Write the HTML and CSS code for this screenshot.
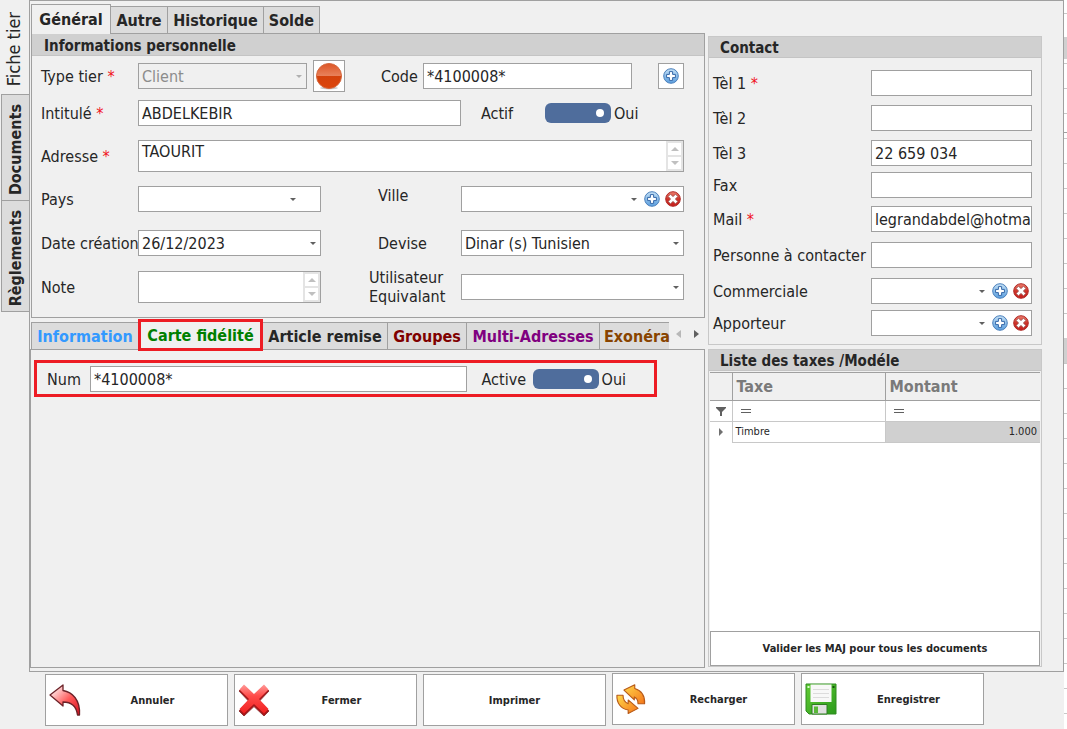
FILE: index.html
```html
<!DOCTYPE html>
<html lang="fr">
<head>
<meta charset="utf-8">
<title>Fiche tier</title>
<link rel="stylesheet" href="styles.css">
</head>
<body>
<svg class="defs" aria-hidden="true">
  <defs>
    <linearGradient id="blue" x1="0" y1="0" x2="0" y2="1"><stop offset="0" stop-color="#c4e0f5"/><stop offset="1" stop-color="#5a9ede"/></linearGradient>
    <linearGradient id="red" x1="0" y1="0" x2="0" y2="1"><stop offset="0" stop-color="#ee8070"/><stop offset="0.5" stop-color="#cf3329"/><stop offset="1" stop-color="#c81e1c"/></linearGradient>
    <linearGradient id="ball" x1="0" y1="0" x2="0" y2="1"><stop offset="0" stop-color="#dd5525"/><stop offset="0.48" stop-color="#e8805a"/><stop offset="0.5" stop-color="#d4420c"/><stop offset="1" stop-color="#dc440a"/></linearGradient>
    <linearGradient id="undo" x1="0" y1="0" x2="1" y2="1"><stop offset="0.2" stop-color="#ffd0d0"/><stop offset="0.55" stop-color="#ff5a5a"/><stop offset="1" stop-color="#d81020"/></linearGradient>
    <linearGradient id="cross" x1="0" y1="0" x2="0" y2="1"><stop offset="0" stop-color="#ff9a98"/><stop offset="0.4" stop-color="#ff4a48"/><stop offset="1" stop-color="#f02020"/></linearGradient>
    <linearGradient id="orange" x1="0" y1="0" x2="1" y2="1"><stop offset="0" stop-color="#ffd84a"/><stop offset="1" stop-color="#f5761a"/></linearGradient>
    <linearGradient id="green" x1="0" y1="0" x2="1" y2="1"><stop offset="0" stop-color="#62cc34"/><stop offset="1" stop-color="#2c9a1c"/></linearGradient>
    <symbol id="add" viewBox="0 0 16 16"><circle cx="8" cy="8" r="7.3" fill="url(#blue)" stroke="#4c80bc"/><path d="M6.4 3.6h3.2v2.8h2.8v3.2H9.6v2.8H6.4V9.6H3.6V6.4h2.8z" fill="#fff" stroke="#3567a8"/></symbol>
    <symbol id="del" viewBox="0 0 16 16"><circle cx="8" cy="8" r="7.3" fill="url(#red)" stroke="#b02a26"/><path d="M5.5 3.2 8 5.600l2.500-2.400 2.300 2.300L10.400 8l2.400 2.500-2.300 2.300L8 10.400l-2.500 2.400-2.300-2.300L5.600 8 3.200 5.500z" fill="#fff" stroke="#97504c" stroke-width=".8"/></symbol>
  </defs>
</svg>

<div class="shell">
  <main class="window">
    <div class="upper">
      <nav class="side-tabs" role="tablist" aria-label="Sections">
        <button class="side-tab side-tab--active" role="tab" aria-selected="true"><span>Fiche tier</span></button>
        <button class="side-tab side-tab--docs" role="tab"><span>Documents</span></button>
        <button class="side-tab side-tab--regl" role="tab"><span>Règlements</span></button>
      </nav>

      <div class="page">
        <div class="left">
          <div class="tabs" role="tablist">
            <button class="tab tab--active" role="tab" aria-selected="true">Général</button>
            <button class="tab tab--autre" role="tab">Autre</button>
            <button class="tab tab--histo" role="tab">Historique</button>
            <button class="tab tab--solde" role="tab">Solde</button>
          </div>

          <section class="panel panel--person">
            <h2 class="title">Informations personnelle</h2>
            <form class="form">
              <div class="row">
                <label class="lead" for="type">Type tier <i>*</i></label>
                <div class="combo combo--off combo--type"><select id="type" disabled><option>Client</option></select></div>
                <button type="button" class="square square--ball" aria-label="Couleur"><svg width="28" height="28" viewBox="0 0 28 28"><ellipse cx="14" cy="26" rx="9" ry="1.500" fill="#ccc"/><circle cx="14" cy="14" r="12.500" fill="url(#ball)" stroke="#d4663c"/></svg></button>
                <label class="code-label" for="code">Code</label>
                <input class="field grow" id="code" value="*4100008*">
                <button type="button" class="square square--add" aria-label="Ajouter"><svg width="16" height="16"><use href="#add"/></svg></button>
              </div>
              <div class="row row--name">
                <label class="lead" for="intitule">Intitulé <i>*</i></label>
                <input class="field grow" id="intitule" value="ABDELKEBIR">
                <label class="actif-label" for="actif">Actif</label>
                <input type="checkbox" class="toggle" id="actif" checked>
                <span class="state state--wide">Oui</span>
              </div>
              <div class="row row--address">
                <label class="lead" for="adresse">Adresse <i>*</i></label>
                <div class="memo grow"><textarea id="adresse">TAOURIT</textarea><div class="spin"><button type="button" class="up" aria-label="Haut"></button><button type="button" class="down" aria-label="Bas"></button></div></div>
              </div>
              <div class="pair pair--pays">
                <label for="pays">Pays</label>
                <div class="combo combo--pays"><select id="pays"><option></option></select></div>
                <label class="mid mid--ville" for="ville">Ville</label>
                <div class="combo combo--icons"><select id="ville"><option></option></select><button type="button" aria-label="Ajouter"><svg width="16" height="16"><use href="#add"/></svg></button><button type="button" aria-label="Supprimer"><svg width="16" height="16"><use href="#del"/></svg></button></div>
              </div>
              <div class="pair pair--date">
                <label for="date">Date création</label>
                <div class="combo"><select id="date"><option>26/12/2023</option></select></div>
                <label class="mid" for="devise">Devise</label>
                <div class="combo"><select id="devise"><option>Dinar (s) Tunisien</option></select></div>
              </div>
              <div class="pair pair--note">
                <label for="note">Note</label>
                <div class="memo"><textarea id="note"></textarea><div class="spin"><button type="button" class="up" aria-label="Haut"></button><button type="button" class="down" aria-label="Bas"></button></div></div>
                <label class="mid mid--user" for="user">Utilisateur<br>Equivalant</label>
                <div class="combo"><select id="user"><option></option></select></div>
              </div>
            </form>
          </section>

          <div class="subtabs">
            <div class="subtabs-list" role="tablist">
              <button class="subtab subtab--info" role="tab">Information</button>
              <button class="subtab subtab--carte" role="tab" aria-selected="true">Carte fidélité</button>
              <button class="subtab subtab--article" role="tab">Article remise</button>
              <button class="subtab subtab--groupes" role="tab">Groupes</button>
              <button class="subtab subtab--multi" role="tab">Multi-Adresses</button>
              <button class="subtab subtab--exo" role="tab">Exonéra</button>
            </div>
            <button class="scroll" aria-label="Précédent"><svg width="5" height="8" viewBox="0 0 5 8"><path d="M5 0v8L0 4z" fill="#b8b8b8"/></svg></button>
            <button class="scroll" aria-label="Suivant"><svg width="5" height="8" viewBox="0 0 5 8"><path d="M0 0v8l5-4z" fill="#606060"/></svg></button>
          </div>
          <section class="card-panel">
            <div class="card-row">
              <label class="num-label" for="num">Num</label>
              <input class="field grow" id="num" value="*4100008*">
              <label class="active-label" for="active">Active</label>
              <input type="checkbox" class="toggle" id="active" checked>
              <span class="state">Oui</span>
            </div>
          </section>
        </div>

        <div class="right">
          <section class="group">
            <h2 class="title">Contact</h2>
            <form class="contact">
              <label for="tel1">Tèl 1 <i>*</i></label><input class="field" id="tel1">
              <label for="tel2">Tèl 2</label><input class="field" id="tel2">
              <label for="tel3">Tèl 3</label><input class="field" id="tel3" value="22 659 034">
              <label for="fax">Fax</label><input class="field" id="fax">
              <label for="mail">Mail <i>*</i></label><input class="field field--full" id="mail" value="legrandabdel@hotmai">
              <label for="pers">Personne à contacter</label><input class="field" id="pers">
              <label for="comm">Commerciale</label>
              <div class="combo combo--icons"><select id="comm"><option></option></select><button type="button" aria-label="Ajouter"><svg width="16" height="16"><use href="#add"/></svg></button><button type="button" aria-label="Supprimer"><svg width="16" height="16"><use href="#del"/></svg></button></div>
              <label for="app">Apporteur</label>
              <div class="combo combo--icons"><select id="app"><option></option></select><button type="button" aria-label="Ajouter"><svg width="16" height="16"><use href="#add"/></svg></button><button type="button" aria-label="Supprimer"><svg width="16" height="16"><use href="#del"/></svg></button></div>
            </form>
          </section>

          <section class="group group--taxes">
            <h2 class="title">Liste des taxes /Modéle</h2>
            <div class="grid-area">
              <table class="taxes">
                <colgroup><col class="c-mark"><col class="c-taxe"><col></colgroup>
                <thead><tr><th></th><th>Taxe</th><th>Montant</th></tr></thead>
                <tbody>
                  <tr class="filter"><td><svg width="10" height="9" viewBox="0 0 10 9"><path d="M0 0h10v1L6 5v4H4V5L0 1z" fill="#606060"/></svg></td><td><svg width="10" height="4" viewBox="0 0 10 4"><path d="M0 0h10v1H0zM0 3h10v1H0z" fill="#606060"/></svg></td><td><svg width="10" height="4" viewBox="0 0 10 4"><path d="M0 0h10v1H0zM0 3h10v1H0z" fill="#606060"/></svg></td></tr>
                  <tr class="data"><td><svg width="4" height="8" viewBox="0 0 4 8"><path d="M0 0v8l4-4z" fill="#707070"/></svg></td><td>Timbre</td><td class="amount">1.000</td></tr>
                </tbody>
              </table>
            </div>
            <button class="validate">Valider les MAJ pour tous les documents</button>
          </section>
        </div>
      </div>
    </div>

    <footer class="actions">
      <button class="action">
        <svg width="32" height="32" viewBox="0 0 32 32"><path d="M1 11 14 1v5.500c9 1.500 17.500 9 16.500 24.500h-2c-1-8-6-13-14.500-13V22z" fill="url(#undo)" stroke="#6b2228" stroke-width="1.300" stroke-linejoin="round"/></svg>
        <span>Annuler</span></button>
      <button class="action">
        <svg width="32" height="34" viewBox="0 0 32 34"><path d="M6 3 16 12.500 26 3l5 5-9.500 10L31 28l-5 5-10-9.500L6 33l-5-5 9.500-10L1 8z" fill="#a81518" stroke="#96383a" stroke-linejoin="round"/><path d="M6 1.500 16 11 26 1.500l4.500 5L21 16l9.500 10-4.500 4.500L16 21l-10 9.500L1.500 26 11 16 1.500 6.500z" fill="url(#cross)"/></svg>
        <span>Fermer</span></button>
      <button class="action action--plain"><span>Imprimer</span></button>
      <button class="action action--high">
        <svg width="30" height="32" viewBox="0 0 32 32"><g fill="url(#orange)" stroke="#b85a18" stroke-width="1.200" stroke-linejoin="round"><path d="M8.500 6.500 20 .8v4C27 7 31 13 30.500 21h-7c0-3.500-1-6-4-7.200V17z"/><path d="M1 12h6.500c0 4 1.500 7.500 5.500 9v-4L23.500 26 13 31.500v-3.700C5 26.500.5 20 1 12z"/></g></svg>
        <span>Recharger</span></button>
      <button class="action action--high">
        <svg width="32" height="32" viewBox="0 0 32 32"><path d="M1 1h30v30H4l-3-3z" fill="url(#green)" stroke="#2f8a20"/><path d="M5.500 1.500h21V19h-21z" fill="#f8f8f8"/><path d="M8 6.500h16M8 10.500h16M8 14.500h16" stroke="#dcdcdc"/><path d="M2.500 3h2v2h-2z" fill="#d8ffd0"/><path d="M27.500 3h2v2h-2z" fill="#14540c"/><path d="M7 21.500h15V31H7z" fill="#e0e0e0" stroke="#2f7a22"/><path d="M9 23.500h4V30H9z" fill="#58b838"/></svg>
        <span>Enregistrer</span></button>
    </footer>
  </main>
  <div class="backdrop"></div>
</div>
</body>
</html>
```

FILE: styles.css
```css
* { box-sizing: border-box; }

body {
  margin: 0;
  background: #f0f0f0;
  color: #262626;
  font: 16px/19px "DejaVu Sans Condensed", "DejaVu Sans", Tahoma, sans-serif;
}

button, input, select, textarea {
  margin: 0;
  padding: 0;
  border: 0;
  border-radius: 0;
  background: none;
  color: inherit;
  font: inherit;
  outline: none;
}

i { color: #f01020; font-style: normal; }
svg { display: block; flex: none; }
.defs { position: absolute; width: 0; height: 0; }
.grow { flex: 1; min-width: 0; }

.shell { display: flex; min-height: 100vh; }
.window { flex: 1; min-width: 0; display: flex; flex-direction: column; }
.upper { flex: 1; display: flex; }

.backdrop {
  width: 3px;
  background:
    linear-gradient(#d0d0d0, #d0d0d0) 0 37px / 100% 22px no-repeat,
    linear-gradient(#a0a0a0, #a0a0a0) 0 132px / 100% 1px no-repeat,
    linear-gradient(#d0d0d0, #d0d0d0) 0 338px / 100% 25px no-repeat,
    repeating-linear-gradient(#fff 0 13px, #c8c8c8 13px 14px, #fff 14px 25px);
}

/* Vertical section tabs */
.side-tabs { width: 29px; display: flex; flex-direction: column; padding-left: 1px; }
.side-tab {
  display: flex;
  align-items: center;
  justify-content: center;
  padding-top: 4px;
  border: 1px solid #a0a0a0;
  border-right: 0;
  background: #dcdcdc;
  font-weight: bold;
}
.side-tab span { writing-mode: vertical-rl; transform: rotate(180deg); white-space: nowrap; }
.side-tab--active { height: 94px; padding-right: 4px; border: 0; background: none; font-size: 18px; font-weight: normal; }
.side-tab--docs { height: 107px; }
.side-tab--regl { height: 111px; border-top: 0; }

.page {
  flex: 1;
  min-width: 0;
  display: flex;
  gap: 3px;
  padding: 3px 21px 3px 0;
  border: 1px solid #a0a0a0;
}
.left { flex: 1; min-width: 0; display: flex; flex-direction: column; }
.right { flex: 0 0 334px; display: flex; flex-direction: column; gap: 4px; padding: 32px 0 1px; }

.tabs { display: flex; align-items: flex-end; height: 29px; padding-left: 1px; }
.tab {
  height: 27px;
  border: 1px solid #a0a0a0;
  border-left: 0;
  border-bottom: 0;
  background: #dcdcdc;
  font-weight: bold;
}
.tab--active { z-index: 1; width: 80px; height: 30px; margin-bottom: -1px; border-left: 1px solid #a0a0a0; background: #f0f0f0; }
.tab--autre { width: 57px; }
.tab--histo { width: 96px; }
.tab--solde { width: 56px; }

.panel { margin-left: 1px; border: 1px solid #a0a0a0; }
.title {
  height: 21px;
  margin: 0;
  padding-left: 11px;
  border-bottom: 1px solid #c4c4c4;
  background: #d0d0d0;
  font-size: 15px;
  line-height: 22px;
}
.panel .title { height: 22px; padding-left: 12px; line-height: 24px; }

.form { padding: 4px 20px 11px 9px; }
.row, .card-row { display: flex; align-items: center; }
.row--name { margin-top: 8px; }
.row--address { margin-top: 14px; }
.lead { width: 97px; }

.pair { display: grid; grid-template-columns: 97px 183fr 140px 223fr; align-items: center; white-space: nowrap; }
.pair--pays { margin-top: 14px; }
.pair--date { margin-top: 18px; }
.pair--note { margin-top: 12px; }
.mid { padding-left: 57px; }
.mid--ville { padding-bottom: 7px; }
.mid--user { padding-left: 48px; }

.field, .combo, .memo { border: 1px solid #a0a0a0; background: #fff; }
.field { width: 100%; height: 26px; padding: 0 3px; }
.field--full { padding-right: 0; }
.combo { display: flex; align-items: center; height: 26px; padding: 0 3px; position: relative; }
.combo select { flex: 1; min-width: 0; height: 24px; padding-right: 14px; appearance: none; }
.combo::after {
  content: "";
  position: absolute;
  right: 4px;
  top: 11px;
  border: 3px solid transparent;
  border-top-color: #606060;
  border-bottom: 0;
  pointer-events: none;
}
.combo--pays::after { right: 24px; }
.combo--icons { gap: 5px; padding: 0 2px; }
.combo--icons::after { right: 46px; }
.combo--type { flex: 0 0 169px; }
.combo--off { background: #f0f0f0; color: #8c8c8c; }
.combo--off select { opacity: 1; }
.combo--off::after { border-top-color: #b0b0b0; }

.memo { display: flex; height: 32px; }
.memo textarea { flex: 1; min-width: 0; padding: 1px 3px; resize: none; overflow: hidden; }
.spin { width: 17px; display: flex; flex-direction: column; padding: 2px; background: #e4e4e4; gap: 2px; }
.spin button { flex: 1; display: flex; align-items: center; justify-content: center; background: #fff; }
.spin button::before { content: ""; border: 4px solid transparent; }
.spin .up::before { border-top: 0; border-bottom-color: #c0c0c0; }
.spin .down::before { border-bottom: 0; border-top-color: #c0c0c0; }

.square { display: flex; align-items: center; justify-content: center; border: 1px solid #a0a0a0; background: #fff; }
.square--ball { width: 32px; height: 32px; margin-left: 6px; }
.square--add { width: 26px; height: 26px; margin-left: 26px; }
.code-label { width: 78px; padding-left: 36px; }
.actif-label { width: 84px; padding-left: 20px; }

.toggle {
  appearance: none;
  display: flex;
  flex: none;
  align-items: center;
  justify-content: flex-end;
  width: 66px;
  height: 20px;
  padding-right: 7px;
  border-radius: 6px;
  background: #4f6d9c;
}
.toggle::before { content: ""; width: 8px; height: 8px; border-radius: 50%; background: #fff; }
.state { padding-left: 3px; }
.state--wide { width: 73px; }

/* Lower tabs */
.subtabs { display: flex; height: 31px; align-items: flex-end; padding-left: 1px; }
.subtabs-list { flex: 1; min-width: 0; display: flex; align-items: flex-end; height: 28px; margin-bottom: -1px; }
.subtab {
  flex: none;
  height: 28px;
  border: 1px solid #a0a0a0;
  border-right: 0;
  background: #dcdcdc;
  font-weight: bold;
  white-space: nowrap;
}
.subtab--info { width: 107px; color: #3399ff; }
.subtab--carte { z-index: 1; width: 125px; height: 32px; margin-bottom: -1px; border: 3px solid #ed1c24; background: #f0f0f0; color: #008000; }
.subtab--article { width: 124px; border-left: 0; }
.subtab--groupes { width: 79px; color: #800000; }
.subtab--multi { width: 133px; color: #800080; }
.subtab--exo { flex: 1 1 0; min-width: 0; padding-left: 4px; border-bottom: 1px solid #a0a0a0; text-align: left; color: #884400; }
.scroll { width: 18px; height: 31px; display: flex; align-items: center; justify-content: center; }

.card-panel { flex: 1; padding: 10px 47px 10px 3px; border: 1px solid #a0a0a0; }
.card-row { height: 37px; padding: 1px 28px 0 10px; border: 3px solid #ed1c24; }
.num-label { width: 43px; }
.active-label { width: 66px; padding-left: 15px; }

/* Contact */
.group { border: 1px solid #c8c8c8; }
.group--taxes { flex: 1; display: flex; flex-direction: column; }
.contact {
  display: grid;
  grid-template-columns: 1fr 161px;
  grid-template-rows: 35px 35px 32px 34px 36px 36px 32px 26px;
  padding: 12px 9px 8px 4px;
}
.contact label { line-height: 28px; white-space: nowrap; }

/* Taxes */
.grid-area { flex: 1; margin: 1px 1px 0; background: #fff; }
.taxes { width: 100%; border-collapse: collapse; table-layout: fixed; }
.c-mark { width: 22px; }
.c-taxe { width: 153px; }
.taxes th {
  height: 28px;
  padding: 0 0 0 4px;
  border: 1px solid #a0a0a0;
  border-width: 1px 0 1px 1px;
  background: #f0f0f0;
  color: #7a7a7a;
  text-align: left;
}
.taxes td { height: 21px; padding: 0 3px; border: 1px solid #c8c8c8; border-right: 0; font-size: 11px; line-height: 14px; }
.taxes th:first-child, .taxes td:first-child { border-left: 0; }
.taxes td:first-child { padding: 0 6px; }
.filter td { padding-left: 8px; }
.data td:first-child { border-bottom: 0; padding-left: 9px; }
.taxes .amount { background: #d0d0d0; text-align: right; }
.validate { height: 35px; margin: 0 1px; border: 1px solid #a0a0a0; background: #fff; font-size: 11px; font-weight: bold; }

/* Bottom buttons */
.actions { display: flex; gap: 6px; padding: 1px 80px 3px 45px; }
.action {
  flex: 1;
  display: flex;
  align-items: center;
  height: 52px;
  margin-top: 1px;
  padding: 0 3px;
  border: 1px solid #a0a0a0;
  background: #fff;
  font-size: 11px;
  font-weight: bold;
}
.action span { flex: 1; }
.action--high { margin-top: 0; }
```
